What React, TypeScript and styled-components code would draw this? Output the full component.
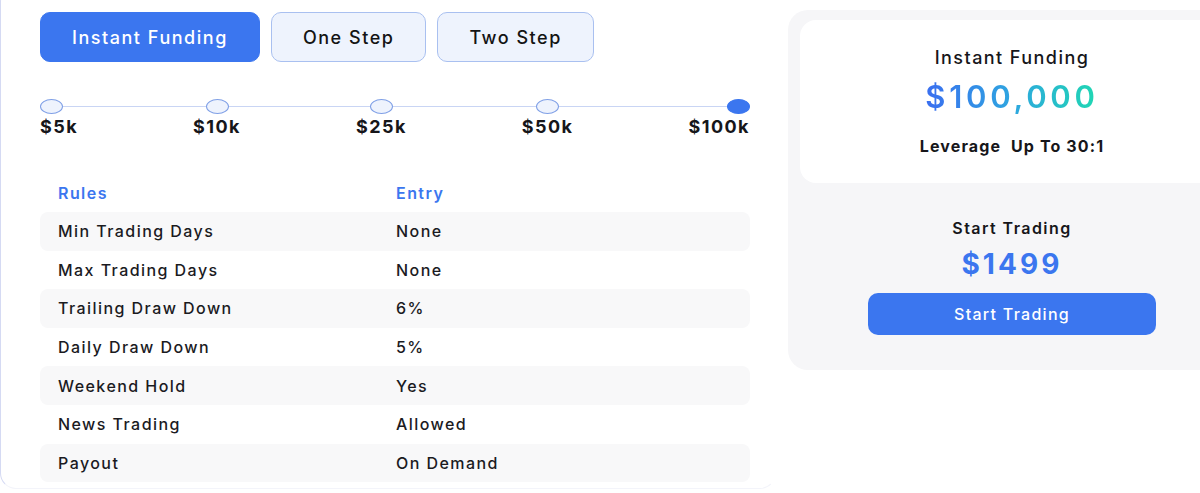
import React from 'react';
import styled, { createGlobalStyle } from 'styled-components';

const GlobalStyle = createGlobalStyle`
  body {
    margin: 0;
    background: #fff;
    overflow: hidden;
    font-family: Inter, "Noto Sans", sans-serif;
    color: #16161a;
  }
`;

const BLUE = '#3b76ef';

const Page = styled.div`
  display: flex;
  align-items: flex-start;
  width: 1300px;
`;

const LeftPanel = styled.section`
  width: 776px;
  box-sizing: border-box;
  margin-top: -14px;
  padding: 25px 25px 6px 39px;
  border: 1px solid #d5daf3;
  border-right-color: transparent;
  border-bottom-color: #f3f4fa;
  border-radius: 16px;
`;

const Tabs = styled.div`
  display: flex;
  gap: 11px;
`;

const Tab = styled.button<{ $active?: boolean }>`
  height: 50px;
  padding: 0 31px;
  border-radius: 10px;
  border: 1px solid ${p => (p.$active ? BLUE : '#a9c0f0')};
  background: ${p => (p.$active ? BLUE : '#eef3fd')};
  color: ${p => (p.$active ? '#fff' : '#141414')};
  font-family: inherit;
  font-size: 18px;
  font-weight: 500;
  letter-spacing: 0.085em;
  cursor: pointer;
`;

const Slider = styled.div`
  position: relative;
  display: flex;
  justify-content: space-between;
  margin-top: 37px;
`;

const Track = styled.div`
  position: absolute;
  left: 11px;
  right: 11px;
  top: 7px;
  height: 1px;
  background: #c9d5f4;
`;

const Stop = styled.div<{ $align: 'flex-start' | 'center' | 'flex-end' }>`
  position: relative;
  display: flex;
  flex-direction: column;
  align-items: ${p => p.$align};
  gap: 2px;
`;

const Dot = styled.span<{ $active?: boolean }>`
  width: 23px;
  height: 15px;
  box-sizing: border-box;
  border-radius: 50%;
  border: 1px solid ${p => (p.$active ? BLUE : '#7f9fe6')};
  background: ${p => (p.$active ? BLUE : '#eef3fd')};
`;

const StopLabel = styled.span`
  font-size: 18px;
  line-height: 22px;
  font-weight: 700;
  letter-spacing: 0.08em;
`;

const Table = styled.div`
  margin-top: 35px;
  display: flex;
  flex-direction: column;
`;

const Row = styled.div<{ $shaded?: boolean; $head?: boolean }>`
  display: grid;
  grid-template-columns: 338px 1fr;
  align-items: center;
  height: ${p => (p.$head ? '39px' : '38.6px')};
  padding-left: 18px;
  border-radius: 8px;
  background: ${p => (p.$shaded ? '#f8f8f9' : 'transparent')};
  font-size: 16px;
  font-weight: ${p => (p.$head ? 600 : 500)};
  letter-spacing: 0.09em;
  color: ${p => (p.$head ? BLUE : '#1b1b1f')};
`;

const RightPanel = styled.aside`
  margin: 10px 0 0 12px;
  width: 448px;
  box-sizing: border-box;
  padding: 10px 12px 35px;
  background: #f6f6f8;
  border-radius: 20px;
  display: flex;
  flex-direction: column;
  align-items: center;
`;

const PlanCard = styled.div`
  align-self: stretch;
  background: #fff;
  border-radius: 16px;
  padding: 27px 0 27px;
  display: flex;
  flex-direction: column;
  align-items: center;
`;

const PlanName = styled.div`
  font-size: 18px;
  line-height: 22px;
  font-weight: 500;
  letter-spacing: 0.08em;
`;

const Amount = styled.div`
  margin-top: 10px;
  font-size: 31px;
  line-height: 36px;
  font-weight: 600;
  letter-spacing: 0.12em;
  background: linear-gradient(90deg, #3a6ef0 0%, #2ea6e0 50%, #1fd8b2 100%);
  -webkit-background-clip: text;
  background-clip: text;
  color: transparent;
`;

const Leverage = styled.div`
  margin-top: 21px;
  font-size: 16px;
  line-height: 20px;
  font-weight: 700;
  letter-spacing: 0.07em;
  white-space: pre;
`;

const PriceTitle = styled.div`
  margin-top: 35px;
  font-size: 16px;
  line-height: 20px;
  font-weight: 600;
  letter-spacing: 0.09em;
`;

const Price = styled.div`
  margin-top: 9px;
  font-size: 28px;
  line-height: 34px;
  font-weight: 700;
  letter-spacing: 0.11em;
  color: ${BLUE};
`;

const StartButton = styled.button`
  margin-top: 12px;
  width: 288px;
  height: 42px;
  border: none;
  border-radius: 10px;
  background: ${BLUE};
  color: #fff;
  font-family: inherit;
  font-size: 16px;
  font-weight: 500;
  letter-spacing: 0.08em;
  cursor: pointer;
`;

const stops = [
  { label: '$5k', align: 'flex-start' as const },
  { label: '$10k', align: 'center' as const },
  { label: '$25k', align: 'center' as const },
  { label: '$50k', align: 'center' as const },
  { label: '$100k', align: 'flex-end' as const, active: true },
];

const rules: [string, string][] = [
  ['Min Trading Days', 'None'],
  ['Max Trading Days', 'None'],
  ['Trailing Draw Down', '6%'],
  ['Daily Draw Down', '5%'],
  ['Weekend Hold', 'Yes'],
  ['News Trading', 'Allowed'],
  ['Payout', 'On Demand'],
];

export default function App() {
  return (
    <>
      <GlobalStyle />
      <Page>
        <LeftPanel>
          <Tabs>
            <Tab $active>Instant Funding</Tab>
            <Tab>One Step</Tab>
            <Tab>Two Step</Tab>
          </Tabs>
          <Slider>
            <Track />
            {stops.map(s => (
              <Stop key={s.label} $align={s.align}>
                <Dot $active={s.active} />
                <StopLabel>{s.label}</StopLabel>
              </Stop>
            ))}
          </Slider>
          <Table>
            <Row $head>
              <span>Rules</span>
              <span>Entry</span>
            </Row>
            {rules.map(([rule, entry], i) => (
              <Row key={rule} $shaded={i % 2 === 0}>
                <span>{rule}</span>
                <span>{entry}</span>
              </Row>
            ))}
          </Table>
        </LeftPanel>
        <RightPanel>
          <PlanCard>
            <PlanName>Instant Funding</PlanName>
            <Amount>$100,000</Amount>
            <Leverage>Leverage  Up To 30:1</Leverage>
          </PlanCard>
          <PriceTitle>Start Trading</PriceTitle>
          <Price>$1499</Price>
          <StartButton>Start Trading</StartButton>
        </RightPanel>
      </Page>
    </>
  );
}
